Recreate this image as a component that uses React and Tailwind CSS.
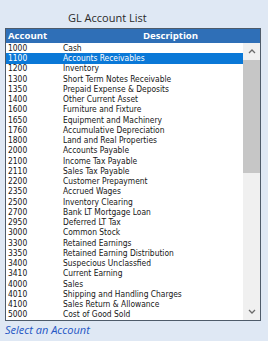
const accounts = [
  ['1000', 'Cash'],
  ['1100', 'Accounts Receivables'],
  ['1200', 'Inventory'],
  ['1300', 'Short Term Notes Receivable'],
  ['1350', 'Prepaid Expense & Deposits'],
  ['1400', 'Other Current Asset'],
  ['1600', 'Furniture and Fixture'],
  ['1650', 'Equipment and Machinery'],
  ['1760', 'Accumulative Depreciation'],
  ['1800', 'Land and Real Properties'],
  ['2000', 'Accounts Payable'],
  ['2100', 'Income Tax Payable'],
  ['2110', 'Sales Tax Payable'],
  ['2200', 'Customer Prepayment'],
  ['2350', 'Accrued Wages'],
  ['2500', 'Inventory Clearing'],
  ['2700', 'Bank LT Mortgage Loan'],
  ['2950', 'Deferred LT Tax'],
  ['3000', 'Common Stock'],
  ['3300', 'Retained Earnings'],
  ['3350', 'Retained Earning Distribution'],
  ['3400', 'Suspecious Unclassfied'],
  ['3410', 'Current Earning'],
  ['4000', 'Sales'],
  ['4010', 'Shipping and Handling Charges'],
  ['4100', 'Sales Return & Allowance'],
  ['5000', 'Cost of Good Sold'],
]

function Arrow({ down = false }) {
  return (
    <svg width="8" height="5" viewBox="0 0 8 5" className="text-[#6b6b6b]">
      <path
        d={down ? 'M1 1 L4 4 L7 1' : 'M1 4 L4 1 L7 4'}
        fill="none"
        stroke="currentColor"
        strokeWidth="1.3"
      />
    </svg>
  )
}

export default function App() {
  const selected = '1100'

  return (
    <div className="w-[268px] h-[341px] bg-[#dfe8f4] flex flex-col pt-[10px] px-[5px] font-['Open_Sans',sans-serif]">
      <div className="pl-[63px] text-[11px] leading-[15px] text-[#2a2a2a]">GL Account List</div>

      <div className="mt-[3px] w-[256px] h-[293px] border border-[#4e5b6a] bg-white flex flex-col">
        {/* Header */}
        <div className="h-[14px] shrink-0 bg-[#2f6fb7] flex items-center text-white font-bold text-[9.6px] leading-none">
          <div className="w-[57px] pl-[2px]">Account</div>
          <div className="flex-1 text-center pl-[18px]">Description</div>
        </div>

        <div className="flex flex-1 min-h-0">
          {/* Rows */}
          <div className="flex-1 overflow-hidden font-['DejaVu_Sans_Condensed','DejaVu_Sans',sans-serif] text-[8.4px] text-[#161616]">
            {accounts.map(([code, desc]) => (
              <div
                key={code}
                className={`h-[10.25px] flex items-center leading-none ${code === selected ? 'bg-[#0a78d7] text-white' : ''}`}
              >
                <div className="w-[57px] pl-[2px]">{code}</div>
                <div className="flex-1 whitespace-nowrap">{desc}</div>
              </div>
            ))}
          </div>

          {/* Scrollbar */}
          <div className="w-[17px] bg-[#f0f0f0] flex flex-col">
            <div className="h-[17px] flex items-center justify-center">
              <Arrow />
            </div>
            <div className="h-[113px] bg-[#c6c6c6]" />
            <div className="flex-1" />
            <div className="h-[17px] flex items-center justify-center">
              <Arrow down />
            </div>
          </div>
        </div>
      </div>

      <div className="mt-[2px] text-[11px] italic text-[#2456c4] leading-[14px]">Select an Account</div>
    </div>
  )
}
